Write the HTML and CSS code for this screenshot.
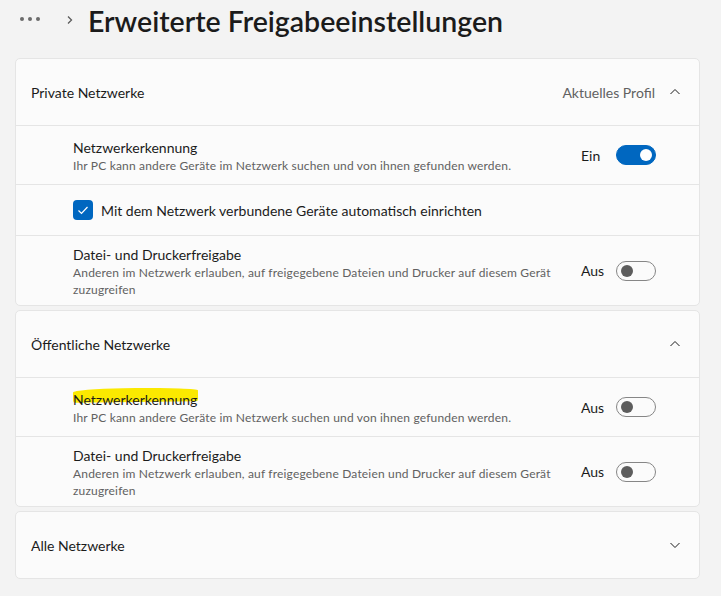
FILE: index.html
```html
<!DOCTYPE html>
<html lang="de">

<head>
    <meta charset="utf-8">
    <title>Erweiterte Freigabeeinstellungen</title>
    <link rel="stylesheet" href="styles.css">
</head>

<body>

    <div class="header">
        <div class="dots">
            <span></span><span></span><span></span>
        </div>
        <svg class="crumb" viewBox="0 0 10 10" width="10" height="10">
            <polyline points="3,1.5 6.5,5 3,8.5" fill="none" stroke="#5c5c5c" stroke-width="1.3" />
        </svg>
        <h1>Erweiterte Freigabeeinstellungen</h1>
    </div>

    <div class="card">
        <div class="card-head">
            <div class="head-title">Private Netzwerke</div>
            <div class="head-note">Aktuelles Profil</div>
            <svg class="chev" viewBox="0 0 12 12" width="12" height="12">
                <polyline points="1.5,8 6,3.5 10.5,8" fill="none" stroke="#1b1b1b" stroke-width="1" />
            </svg>
        </div>

        <div class="row">
            <div class="row-text">
                <div class="row-title">Netzwerkerkennung</div>
                <div class="row-sub">Ihr PC kann andere Geräte im Netzwerk suchen und von ihnen gefunden werden.</div>
            </div>
            <div class="state">Ein</div>
            <div class="toggle on"><span></span></div>
        </div>

        <div class="row check-row">
            <div class="checkbox">
                <svg viewBox="0 0 20 20" width="20" height="20">
                    <polyline points="5.5,10.5 8.5,13.5 14.5,7" fill="none" stroke="#fff" stroke-width="1.2" />
                </svg>
            </div>
            <div class="check-label">Mit dem Netzwerk verbundene Geräte automatisch einrichten</div>
        </div>

        <div class="row tall">
            <div class="row-text">
                <div class="row-title">Datei- und Druckerfreigabe</div>
                <div class="row-sub">Anderen im Netzwerk erlauben, auf freigegebene Dateien und Drucker auf diesem Gerät zuzugreifen</div>
            </div>
            <div class="state">Aus</div>
            <div class="toggle"><span></span></div>
        </div>
    </div>

    <div class="card">
        <div class="card-head">
            <div class="head-title">Öffentliche Netzwerke</div>
            <svg class="chev" viewBox="0 0 12 12" width="12" height="12">
                <polyline points="1.5,8 6,3.5 10.5,8" fill="none" stroke="#1b1b1b" stroke-width="1" />
            </svg>
        </div>

        <div class="row">
            <div class="row-text">
                <div class="row-title"><span class="marked">Netzwerkerkennung</span></div>
                <div class="row-sub">Ihr PC kann andere Geräte im Netzwerk suchen und von ihnen gefunden werden.</div>
            </div>
            <div class="state">Aus</div>
            <div class="toggle"><span></span></div>
        </div>

        <div class="row tall">
            <div class="row-text">
                <div class="row-title">Datei- und Druckerfreigabe</div>
                <div class="row-sub">Anderen im Netzwerk erlauben, auf freigegebene Dateien und Drucker auf diesem Gerät zuzugreifen</div>
            </div>
            <div class="state">Aus</div>
            <div class="toggle"><span></span></div>
        </div>
    </div>

    <div class="card">
        <div class="card-head">
            <div class="head-title">Alle Netzwerke</div>
            <svg class="chev" viewBox="0 0 12 12" width="12" height="12">
                <polyline points="1.5,4 6,8.5 10.5,4" fill="none" stroke="#1b1b1b" stroke-width="1" />
            </svg>
        </div>
    </div>

</body>

</html>
```

FILE: styles.css
```css
body {
    margin: 0;
    background-color: #f3f3f3;
    font-family: Lato, "Noto Sans", sans-serif;
    color: #1b1b1b;
}

.header {
    display: flex;
    align-items: center;
    height: 41px;
    padding-left: 20px;
    margin-bottom: 17px;
}

.header .dots {
    display: flex;
    gap: 4px;
    margin-top: -3px;
}

.header .dots span {
    width: 4px;
    height: 4px;
    border-radius: 50%;
    background-color: #6b6b6b;
}

.header .crumb {
    margin-left: 25px;
    margin-top: -2px;
}

.header h1 {
    margin: 0 0 0 13px;
    font-size: 28.5px;
    font-weight: 600;
    color: #1b1b1b;
}

.card {
    margin: 0 21px 4px 15px;
    background-color: #fbfbfb;
    border: 1px solid #e5e5e5;
    border-radius: 5px;
}

.card-head {
    display: flex;
    align-items: center;
    height: 66px;
    padding: 0 18px 0 15px;
    font-size: 14px;
}

.card-head .head-title {
    flex: 1;
}

.card-head .head-note {
    color: #616161;
    margin-right: 14px;
}

.row {
    display: flex;
    align-items: center;
    height: 58px;
    padding: 0 43px 0 57px;
    border-top: 1px solid #e5e5e5;
}

.row.tall {
    height: 69px;
}

.row-text {
    flex: 1;
    padding-right: 18px;
    margin-top: 2px;
}

.row-title {
    font-size: 14px;
    line-height: 19px;
}

.row-sub {
    font-size: 12px;
    line-height: 17px;
    letter-spacing: 0.17px;
    color: #616161;
}

.marked {
    position: relative;
    z-index: 0;
}

.marked::before {
    content: "";
    position: absolute;
    left: 0;
    right: -1px;
    top: -3px;
    height: 14px;
    background-color: #fbe900;
    border-radius: 40% 50% 2px 2px / 4px 3px 2px 2px;
    transform: rotate(-0.6deg);
    z-index: -1;
}

.state {
    width: 35px;
    font-size: 14px;
}

.toggle {
    width: 40px;
    height: 20px;
    box-sizing: border-box;
    border: 1px solid #868686;
    border-radius: 10px;
    display: flex;
    align-items: center;
    padding-left: 4px;
}

.toggle span {
    width: 12px;
    height: 12px;
    border-radius: 50%;
    background-color: #5d5d5d;
}

.toggle.on {
    background-color: #0067c0;
    border-color: #0067c0;
    padding-left: 23px;
}

.toggle.on span {
    background-color: #fff;
}

.check-row {
    height: 50px;
}

.checkbox {
    width: 20px;
    height: 20px;
    border-radius: 4px;
    background-color: #0067c0;
    margin-right: 8px;
}

.checkbox svg {
    display: block;
}

.check-label {
    font-size: 14px;
}
```
